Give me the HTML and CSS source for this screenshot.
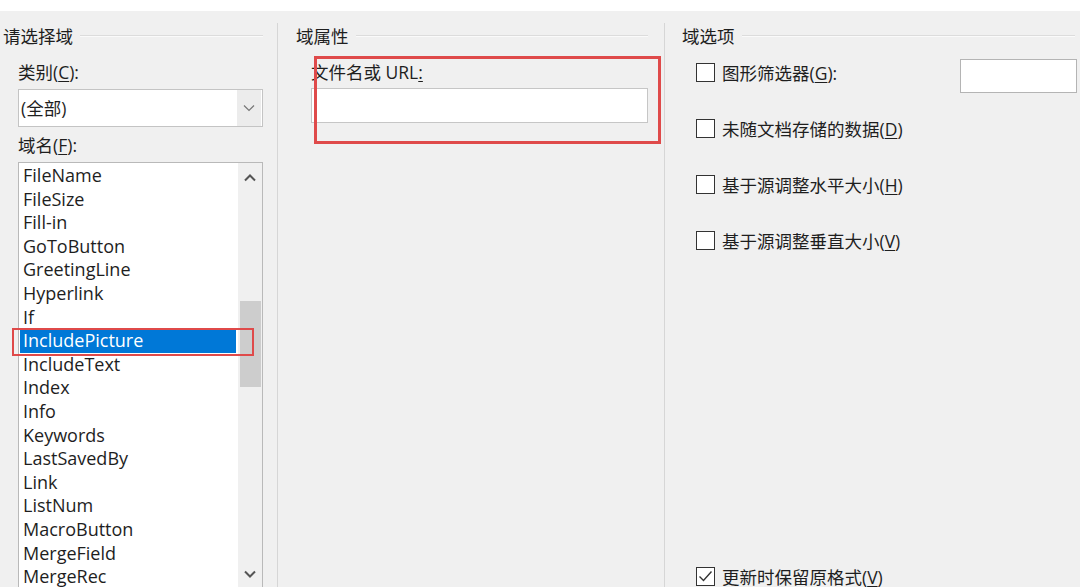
FILE: index.html
```html
<!DOCTYPE html>
<html lang="zh-CN">
<head>
<meta charset="utf-8">
<title>域</title>
<link rel="stylesheet" href="styles.css">
</head>
<body>
<div class="topstrip"></div>
<div class="dialog">
  <section class="col col-left">
    <div class="group-title"><span>请选择域</span><i class="rule"></i></div>
    <div class="label lbl-cat">类别(<u>C</u>):</div>
    <div class="combo">
      <span class="combo-value">(全部)</span>
      <span class="combo-btn">
        <svg width="12" height="8" viewBox="0 0 12 8"><polyline points="1,1.5 6,6.5 11,1.5" fill="none" stroke="#777" stroke-width="1.2"/></svg>
      </span>
    </div>
    <div class="label lbl-name">域名(<u>F</u>):</div>
    <div class="listbox">
      <ul class="items">
        <li>FileName</li>
        <li>FileSize</li>
        <li>Fill-in</li>
        <li>GoToButton</li>
        <li>GreetingLine</li>
        <li>Hyperlink</li>
        <li>If</li>
        <li class="selected">IncludePicture</li>
        <li>IncludeText</li>
        <li>Index</li>
        <li>Info</li>
        <li>Keywords</li>
        <li>LastSavedBy</li>
        <li>Link</li>
        <li>ListNum</li>
        <li>MacroButton</li>
        <li>MergeField</li>
        <li>MergeRec</li>
      </ul>
      <div class="scrollbar">
        <div class="sb-btn"><svg width="12" height="8" viewBox="0 0 12 8"><polyline points="1,6.5 6,1.5 11,6.5" fill="none" stroke="#555" stroke-width="2"/></svg></div>
        <div class="sb-track"><div class="sb-thumb"></div></div>
        <div class="sb-btn"><svg width="12" height="8" viewBox="0 0 12 8"><polyline points="1,1.5 6,6.5 11,1.5" fill="none" stroke="#555" stroke-width="2"/></svg></div>
      </div>
      <div class="hl-box hl-item"></div>
    </div>
  </section>

  <section class="col col-mid">
    <div class="group-title"><span>域属性</span><i class="rule"></i></div>
    <div class="label lbl-url">文件名或 URL<u>:</u></div>
    <div class="textbox tb-url"></div>
    <div class="hl-box hl-url"></div>
  </section>

  <section class="col col-right">
    <div class="group-title"><span>域选项</span><i class="rule"></i></div>
    <div class="opt first">
      <span class="cb"></span><span class="opt-text">图形筛选器(<u>G</u>):</span>
      <div class="textbox tb-filter"></div>
    </div>
    <div class="opt"><span class="cb"></span><span class="opt-text">未随文档存储的数据(<u>D</u>)</span></div>
    <div class="opt"><span class="cb"></span><span class="opt-text">基于源调整水平大小(<u>H</u>)</span></div>
    <div class="opt"><span class="cb"></span><span class="opt-text">基于源调整垂直大小(<u>V</u>)</span></div>
    <div class="opt last">
      <span class="cb checked"><svg width="15" height="13" viewBox="0 0 15 13"><polyline points="1.5,6.5 5.5,10.5 13.5,1.5" fill="none" stroke="#333" stroke-width="1.4"/></svg></span>
      <span class="opt-text">更新时保留原格式(<u>V</u>)</span>
    </div>
  </section>
</div>
</body>
</html>
```

FILE: styles.css
```css
html, body {
  margin: 0;
  padding: 0;
  width: 1080px;
  height: 587px;
  overflow: hidden;
  background: #f0f0f0;
}
body {
  font-family: "Open Sans", "Noto Sans CJK SC", sans-serif;
  font-size: 17.5px;
  color: #1e1e1e;
}
u { text-underline-offset: 2px; }

.topstrip {
  height: 11px;
  background: #ffffff;
}
.dialog {
  display: grid;
  grid-template-columns: 277px 387px 1fr;
  margin-top: 12px;
  height: 564px;
}
.col {
  position: relative;
  display: flex;
  flex-direction: column;
  min-height: 0;
}
.col-mid, .col-right {
  border-left: 1px solid #d6d6d6;
}

.group-title {
  display: flex;
  align-items: center;
  height: 26px;
  line-height: 26px;
  white-space: nowrap;
}
.group-title .rule {
  flex: 1;
  height: 0;
  border-top: 1px solid #dcdcdc;
  border-bottom: 1px solid #fafafa;
  margin-left: 7px;
  margin-top: -1px;
}
.col-left { padding: 0 14px 0 3px; }
.col-mid { padding: 0 16px 0 18px; }
.col-right { padding: 0 5px 0 17px; }

.label {
  height: 24px;
  line-height: 24px;
  white-space: nowrap;
}
.lbl-cat { margin: 11px 0 0 15px; }
.lbl-name { margin: 6px 0 0 15px; }

.combo {
  margin: 5px 0 0 15px;
  height: 36px;
  border: 1px solid #c4c4c4;
  background: #fff;
  display: flex;
  align-items: stretch;
}
.combo-value {
  flex: 1;
  padding-left: 2px;
  line-height: 36px;
}
.combo-btn {
  width: 24px;
  margin: 0 1px 0 0;
  background: #ececec;
  display: flex;
  align-items: center;
  justify-content: center;
}

.listbox {
  position: relative;
  margin: 5px 0 0 15px;
  height: 428px;
  border: 1px solid #b9b9b9;
  background: #fff;
  display: flex;
}
.items {
  list-style: none;
  margin: 0;
  padding: 1px 0 0;
  flex: 1;
  font-size: 18px;
}
.items li {
  height: 23.6px;
  line-height: 23.6px;
  padding-left: 3px;
  margin: 0 2px 0 1px;
  white-space: nowrap;
  color: #1e1e1e;
}
.items li.selected {
  background: #0078d7;
  color: #ffffff;
}
.scrollbar {
  width: 24px;
  background: #f0f0f0;
  display: flex;
  flex-direction: column;
}
.sb-btn {
  height: 30px;
  display: flex;
  align-items: center;
  justify-content: center;
}
.sb-track {
  flex: 1;
  padding-top: 108px;
}
.sb-thumb {
  height: 86px;
  margin: 0 1px 0 2px;
  background: #cdcdcd;
}

.hl-box {
  position: absolute;
  border: 2.5px solid #df4a4a;
  box-sizing: border-box;
  pointer-events: none;
}
.hl-item {
  left: -7px;
  top: 165px;
  width: 242px;
  height: 28px;
}

.lbl-url { margin: 11px 0 0 15px; }
.textbox {
  background: #fff;
  border: 1px solid #c6c6c6;
  box-sizing: border-box;
}
.tb-url {
  margin: 4px 0 0 15px;
  height: 35px;
}
.hl-url {
  left: 36px;
  top: 33px;
  width: 347px;
  height: 88px;
  border-width: 3px;
}

.opt {
  display: flex;
  align-items: center;
  height: 24px;
  margin-top: 32px;
  margin-left: 14px;
  white-space: nowrap;
}
.opt.first { margin-top: 11px; position: relative; }
.opt.last { margin-top: auto; margin-bottom: -1px; }
.cb {
  width: 19px;
  height: 19px;
  box-sizing: border-box;
  border: 1px solid #333;
  background: #fff;
  margin-right: 7px;
  display: flex;
  align-items: center;
  justify-content: center;
  flex: none;
}
.tb-filter {
  position: absolute;
  left: 264px;
  top: -1px;
  width: 117px;
  height: 34px;
  border-color: #b4b4b4;
}
```
